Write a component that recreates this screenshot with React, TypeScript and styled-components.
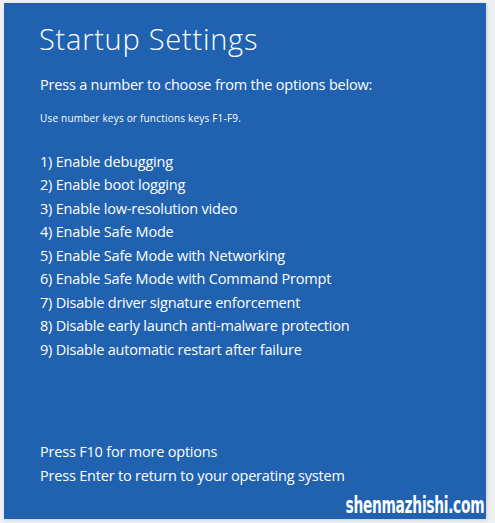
import React from "react";
import styled, { createGlobalStyle } from "styled-components";

const Global = createGlobalStyle`
  html, body { margin: 0; padding: 0; background: #eef0f2; }
  body { width: 495px; height: 523px; overflow: hidden; }
`;

const Page = styled.div`
  width: 495px;
  height: 523px;
  box-sizing: border-box;
  padding: 3px 9px 4px 4px;
`;

const Panel = styled.div`
  position: relative;
  height: 100%;
  box-sizing: border-box;
  background: #2062b0;
  color: #ffffff;
  font-family: "Open Sans", "Noto Sans", sans-serif;
  padding: 16px 0 0 35px;
  display: flex;
  flex-direction: column;
  box-shadow: 1px 1px 3px rgba(0, 0, 0, 0.15);
`;

const Title = styled.h1`
  margin: 0;
  font-weight: 300;
  font-size: 29px;
  line-height: 40px;
  letter-spacing: 0.75px;
`;

const Subtitle = styled.p`
  margin: 16px 0 0 1px;
  font-size: 14.5px;
  line-height: 20px;
  letter-spacing: -0.2px;
`;

const Hint = styled.p`
  margin: 15.5px 0 0 1px;
  font-size: 10px;
  line-height: 14px;
  letter-spacing: 0.2px;
`;

const OptionList = styled.ol`
  list-style: none;
  margin: 25px 0 0 0;
  padding: 0 0 0 1px;
`;

const Option = styled.li`
  font-size: 14.5px;
  line-height: 23.5px;
  letter-spacing: -0.2px;
`;

const Footer = styled.div`
  margin-top: auto;
  margin-bottom: 32px;
  padding-left: 1px;
`;

const FooterLine = styled.p`
  margin: 0;
  font-size: 14.5px;
  line-height: 23.5px;
  letter-spacing: -0.2px;
`;

const Watermark = styled.span`
  position: absolute;
  right: 2px;
  bottom: 2px;
  font-family: "DejaVu Sans", sans-serif;
  font-weight: 700;
  font-size: 23px;
  line-height: 24px;
  letter-spacing: -0.5px;
  color: #ffffff;
  transform: scaleX(0.6);
  transform-origin: right bottom;
  white-space: nowrap;
`;

const options = [
  "1) Enable debugging",
  "2) Enable boot logging",
  "3) Enable low-resolution video",
  "4) Enable Safe Mode",
  "5) Enable Safe Mode with Networking",
  "6) Enable Safe Mode with Command Prompt",
  "7) Disable driver signature enforcement",
  "8) Disable early launch anti-malware protection",
  "9) Disable automatic restart after failure",
];

export default function App() {
  return (
    <>
      <Global />
      <Page>
        <Panel>
          <Title>Startup Settings</Title>
          <Subtitle>Press a number to choose from the options below:</Subtitle>
          <Hint>Use number keys or functions keys F1-F9.</Hint>
          <OptionList>
            {options.map((o) => (
              <Option key={o}>{o}</Option>
            ))}
          </OptionList>
          <Footer>
            <FooterLine>Press F10 for more options</FooterLine>
            <FooterLine>Press Enter to return to your operating system</FooterLine>
          </Footer>
          <Watermark>shenmazhishi.com</Watermark>
        </Panel>
      </Page>
    </>
  );
}
